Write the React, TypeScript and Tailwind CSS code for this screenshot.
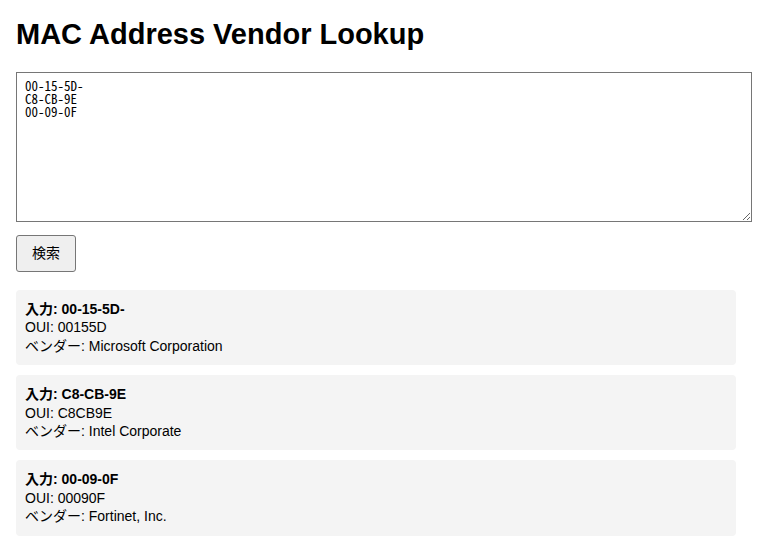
const results = [
  { input: "00-15-5D-", oui: "00155D", vendor: "Microsoft Corporation" },
  { input: "C8-CB-9E", oui: "C8CB9E", vendor: "Intel Corporate" },
  { input: "00-09-0F", oui: "00090F", vendor: "Fortinet, Inc." },
];

export default function App() {
  return (
    <div className="min-h-screen bg-white px-4 pt-[18px] text-black font-['Liberation_Sans','Noto_Sans_CJK_JP',sans-serif]">
      <h1 className="text-[29px] font-bold leading-[33px]">MAC Address Vendor Lookup</h1>
      <textarea
        className="mt-[21px] block w-[736px] h-[150px] border border-[#767676] px-2 pt-[6px] text-[13px] leading-[13px] text-black outline-none font-['Noto_Sans_Mono_CJK_JP','Liberation_Mono',monospace]"
        defaultValue={"00-15-5D-\nC8-CB-9E\n00-09-0F"}
      />
      <button className="mt-[13px] block h-[37px] w-[60px] rounded-[3px] border border-[#767676] bg-[#efefef] text-[14px]">
        検索
      </button>
      <div className="mt-[18px] flex w-[720px] flex-col gap-[10px]">
        {results.map((r) => (
          <div key={r.input} className="rounded-[4px] bg-[#f4f4f4] px-[9px] py-[10px] text-[14px] leading-[18.4px]">
            <div className="font-bold">入力: {r.input}</div>
            <div>OUI: {r.oui}</div>
            <div>ベンダー: {r.vendor}</div>
          </div>
        ))}
      </div>
    </div>
  );
}
